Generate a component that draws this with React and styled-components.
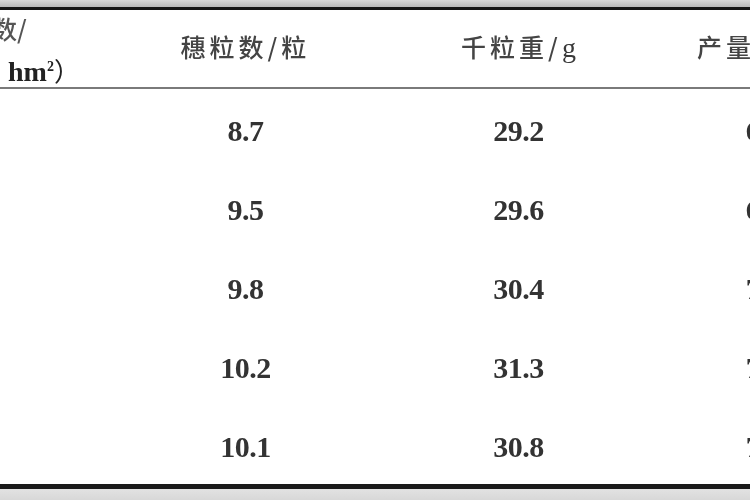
import React from "react";
import styled, { createGlobalStyle } from "styled-components";

const Global = createGlobalStyle`
  html, body { margin: 0; padding: 0; background: #fff; }
  body { width: 750px; height: 500px; overflow: hidden; }
`;

const Page = styled.div`
  width: 750px;
  height: 500px;
  overflow: hidden;
  display: flex;
  flex-direction: column;
  background: #fff;
`;

const Band = styled.div`
  height: ${(p) => p.$h}px;
  flex: none;
  background: ${(p) => p.$bg};
`;

const Table = styled.table`
  border-collapse: collapse;
  table-layout: fixed;
  width: 903px;
  flex: none;
  font-family: "Liberation Serif", "Noto Sans CJK SC", serif;
  color: #2b2b2b;
`;

const HeadRow = styled.tr`
  height: 77px;
  border-bottom: 2px solid #7a7a7a;
`;

const Th = styled.th`
  font-weight: normal;
  padding: 0 0 3px 0;
  height: 74px;
  white-space: nowrap;
  overflow: hidden;
  text-align: ${(p) => p.$align || "center"};
  vertical-align: middle;
  font-size: 28px;
  line-height: 32px;
  color: #3a3a3a;
  filter: blur(0.5px);
`;

const Cjk = styled.span`
  font-family: "Noto Sans CJK SC", sans-serif;
  font-size: 25px;
  font-weight: 500;
  letter-spacing: 4px;
  color: #444;
  margin-left: ${(p) => p.$ml || 0}px;
`;

const LeftHead = styled.div`
  height: 77px;
  margin-bottom: -3px;
  display: flex;
  flex-direction: column;
  justify-content: space-between;
  align-items: flex-start;
`;

const FirstLine = styled.span`
  margin-left: -8px;
  line-height: 36px;
  font-family: "Noto Sans CJK SC", sans-serif;
  font-size: 25px;
  font-weight: 500;
  color: #555;
`;

const SecondLine = styled.span`
  margin-left: 8px;
  line-height: 30px;
  font-size: 28px;
  color: #222;
  font-weight: 600;
`;

const Sup = styled.sup`
  font-size: 14px;
  line-height: 0;
`;

const Paren = styled.span`
  font-family: "Noto Sans CJK SC", sans-serif;
  font-weight: normal;
  font-size: 26px;
`;

const Row = styled.tr`
  height: 79px;
`;

const Td = styled.td`
  padding: 4px 0 0 ${(p) => p.$pl || 0}px;
  height: 75px;
  white-space: nowrap;
  overflow: hidden;
  text-align: center;
  vertical-align: middle;
  font-size: 30px;
  font-weight: bold;
  letter-spacing: -0.5px;
  color: #333;
  filter: blur(0.6px);
`;

const rows = [
  ["8.7", "29.2", "6 812.4"],
  ["9.5", "29.6", "6 935.1"],
  ["9.8", "30.4", "7 105.6"],
  ["10.2", "31.3", "7 362.8"],
  ["10.1", "30.8", "7 240.3"],
];

export default function App() {
  return (
    <Page>
      <Global />
      <Band $h={7} $bg="linear-gradient(#d8d8d8, #b8b8b8)" />
      <Band $h={3} $bg="#151515" />
      <Table>
        <colgroup>
          <col style={{ width: 109 }} />
          <col style={{ width: 273 }} />
          <col style={{ width: 273 }} />
          <col style={{ width: 248 }} />
        </colgroup>
        <thead>
          <HeadRow>
            <Th $align="left">
              <LeftHead>
                <FirstLine>数/</FirstLine>
                <SecondLine>
                  hm<Sup>2</Sup>
                  <Paren>）</Paren>
                </SecondLine>
              </LeftHead>
            </Th>
            <Th>
              <Cjk>穗粒数/粒</Cjk>
            </Th>
            <Th>
              <Cjk>千粒重/</Cjk>g
            </Th>
            <Th $align="left">
              <Cjk $ml={42}>产量/(kg/hm²)</Cjk>
            </Th>
          </HeadRow>
        </thead>
        <tbody>
          {rows.map((r, i) => (
            <Row key={i}>
              <Td />
              <Td>{r[0]}</Td>
              <Td>{r[1]}</Td>
              <Td $pl={20}>{r[2]}</Td>
            </Row>
          ))}
        </tbody>
      </Table>
      <Band $h={5} $bg="#1a1a1a" />
      <Band $h={20} $bg="linear-gradient(#e2e2e2, #cfcfcf)" />
    </Page>
  );
}
